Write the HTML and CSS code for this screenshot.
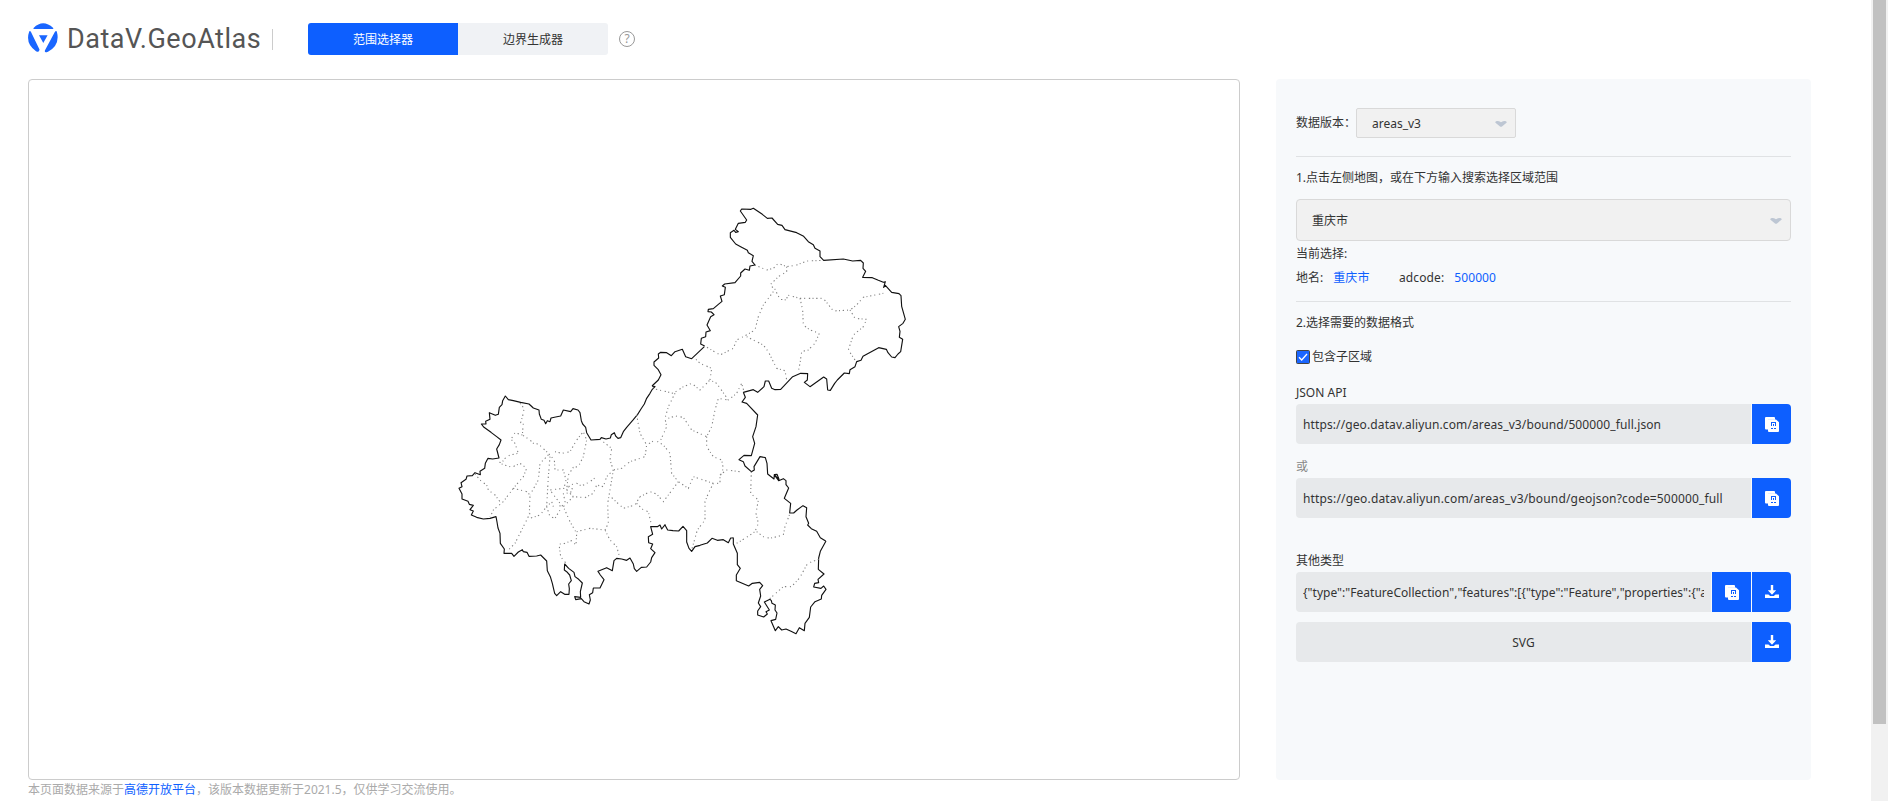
FILE: index.html
```html
<!DOCTYPE html>
<html lang="zh-CN">
<head>
<meta charset="utf-8">
<title>DataV.GeoAtlas</title>
<link rel="stylesheet" href="styles.css">
</head>
<body>
<svg class="defs" width="0" height="0">
  <symbol id="copy" viewBox="0 0 14 15">
    <path fill="#fff" d="M0 1Q0 0 1 0H9Q10 0 10 1V2H3V12.5H1Q0 12.5 0 11.5Z"/>
    <path fill="#fff" fill-opacity=".8" d="M2 1.5H10V3H3.5V12H2Z"/>
    <path fill="#fff" fill-rule="evenodd" d="M3 2.4H11L14 5.2V14Q14 15 13 15H4Q3 15 3 14ZM6 5V9H7V6H10V9H11V5ZM8 7V9H9V7ZM6 11V12H8V11ZM9 11V12H11V11Z"/>
  </symbol>
  <symbol id="download" viewBox="0 0 14 14">
    <path fill="#fff" d="M5.8 0H8.2V5.2H11.2L7 9.8 2.8 5.2H5.8ZM0 9.6H3.4L5.2 11H8.8L10.6 9.6H14V13H0Z"/>
  </symbol>
  <symbol id="arrow" viewBox="0 0 12 6">
    <path fill="#bdc6d3" d="M.2 1.4Q.6 0 2.4 .1Q4 .2 6 1.2Q8 .2 9.6 .1Q11.4 0 11.8 1.4L7 5.4Q6 6 5 5.4Z"/>
  </symbol>
</svg>
<div class="page">
  <main class="content">
    <header class="header">
      <svg class="logo" viewBox="0 0 30 30">
        <path fill="#1a66ff" d="M5.6 4.9Q15-4.2 25.2 4.9Q25.8 6 24.6 6H6.4Q5 6 5.6 4.9ZM1.2 8.4Q2.2 7.6 3 9L11.5 26.6Q11.2 30 8 28.2Q-3 20.5 1.2 8.4ZM28.8 8.4Q27.8 7.6 26.8 9L17 27.2Q16 30.4 20 28.8Q32.5 22 28.8 8.4ZM11 12.3H19.6L15.3 20Z"/>
      </svg>
      <span class="brand">DataV.GeoAtlas</span>
      <span class="divider"></span>
      <nav class="tabs"><a class="tab active">范围选择器</a><a class="tab">边界生成器</a></nav>
      <span class="help">?</span>
    </header>
    <div class="columns">
      <section class="left">
        <div class="map">
          <svg viewBox="28 79 1212 701" class="map-svg">
            <g class="outline">
              <path transform="translate(440 380) scale(.33333)" d="M636 18 645 20 637 28 630 40 620 55 613 72 603 87 593 103 580 119 560 142 550 155 542 173 534 175 527 168 523 158 514 164 511 174 498 177 484 173 480 178 453 180 440 158 437 142 428 132 424 122 420 98 414 90 399 86 392 95 370 90 362 108 347 111 333 114 330 125 322 122 317 131 312 121 304 118 298 102 297 90 280 84 267 72 242 67 220 62 205 59 196 48 188 62 186 74 178 82 175 103 166 106 148 98 150 118 137 124 138 132 124 132 132 142 153 157 170 170 183 180 178 194 170 207 177 234 158 237 144 235 136 250 134 265 120 274 121 284 105 278 97 287 81 288 78 298 63 308 66 320 57 325 66 342 66 357 84 364 88 373 100 376 90 389 100 393 94 405 110 412 130 417 150 415 168 410 171 426 174 444 180 460 181 490 193 507 192 520 215 520 222 529 235 516 247 509 250 515 261 517 267 529 290 528 302 525 320 543 322 572 331 590 337 610 344 640 350 647 362 635 374 643 387 643 388 626 386 612 394 602 389 585 380 575 373 570 374 552 386 565 402 577 405 590 416 598 427 609 421 635 422 652 404 650 407 659 424 656 432 665 447 672 451 660 448 644 458 638 460 624 480 624 492 599 481 585 474 574 500 563 517 572 522 542 530 535 545 537 560 541 570 534 580 552 583 566 590 574 604 562 620 561 632 546 635 533 645 518 632 506 638 492 626 488 625 470 638 463 632 440 652 440 660 435 665 447 676 433"/>
              <path transform="translate(640 330) scale(.33333)" d="M193 50 155 86 137 80 127 58 105 65 94 77 80 68 62 67 55 72 56 84 42 96 42 106 54 118 63 134 55 150 36 168M75 585 83 600 99 602 116 603 129 589 140 602 140 636 147 655 155 664 165 650 180 646 202 639 216 625 232 631 250 629 265 638 272 624 278 624M310 187 316 202 306 216 320 220 353 255 348 290 338 320 344 340 334 377 312 376 297 389 310 395 315 408 334 425 343 420 342 410 360 380 376 383 381 400 383 432 402 447 403 434 411 433 417 448 403 435 416 452 430 446 438 452 438 464 446 474 433 505 452 520 449 549 461 549 471 540 489 527 500 533 498 560 506 580 503 585 514 596 530 604 541 623 557 633"/>
              <path transform="translate(700 200) scale(.33333)" d="M14 438 2 432 4 415 17 410 18 396 31 392 21 375 32 350 42 344 34 336 24 335 25 328 40 326 55 313 66 304 61 288 73 284 76 262 67 258 74 252 105 248 122 228 122 219 135 207 148 211 150 198 165 195 156 184 160 167 145 158 142 151 122 140 107 132 91 112 91 98 102 91 107 97 115 95 106 88 115 70 136 67 140 60 121 33 125 27 153 28 160 25 187 43 202 55 216 54 233 73 246 76 255 89 290 98 311 109 325 125 340 134 345 145 360 153 360 170 371 181 430 177 458 183 482 181 490 189 489 205 497 214 488 232 517 233 535 241 550 247 556 245 551 262 556 256 575 277 597 281 603 287 605 319 616 358 609 370 596 380 600 394 598 412 608 418 602 455 594 462 585 473 575 471 564 458 559 448 536 443 489 469 483 481 470 485 465 500 450 509 448 521 433 519 412 540 404 550 391 571 383 570 380 537 371 531 330 560 313 547 322 540 323 521 302 520 278 530 242 568 225 569 215 565 206 543 196 543 192 560 173 577 160 569 130 577"/>
              <path transform="translate(680 440) scale(.33333)" d="M158 292 160 295 160 312 172 340 172 374 181 385 169 405 169 422 206 438 217 430 239 427 248 437 239 448 242 468 235 489 242 500 233 513 233 525 251 531 262 522 258 515 268 510 253 486 270 478 274 482 276 490 286 495 285 510 291 519 287 538 273 542 286 572 295 560 305 570 318 567 333 574 348 581 358 563 373 572 375 550 388 532 392 501 405 485 424 477 425 466 438 448 431 438 423 445 401 441 404 430 416 428 414 418 432 402 415 388 416 354 421 334 438 303"/>
            </g>
            <g class="district">
              <path transform="translate(440 380) scale(.33333)" d="M240 70 252 85 250 100 242 128 250 130 247 165 270 180 280 190 295 192 320 215 343 240 345 270 370 270 378 300 372 325 330 330M247 165 225 158 213 178 225 190 235 220 210 225 195 235 185 248 175 246M185 252 215 262 240 250 260 265 250 290 220 325 190 365 160 390 150 412M105 282 125 305 140 315 145 330 165 345 180 365M220 325 260 335 270 345 268 400M270 400 240 460 225 490 200 515M325 225 300 250 295 300 270 345M330 230 325 290 320 380 300 405 270 415M320 380 330 410 345 415 360 390 360 370 345 350 330 330M345 215 365 220 390 215 410 180 430 155 440 180 430 230 415 260 400 262 385 285 380 330 400 350 435 353 460 340 470 315 490 320 500 290 520 270 510 240 515 205 480 178M380 330 390 315 410 310 425 318 450 305 470 290M400 350 370 380 390 425 410 460 408 495 395 482 370 492 357 492 362 530 378 550M410 455 450 445 495 450 510 480 530 500 540 535M495 450 505 430 503 370 510 330 520 270 545 265 570 245 615 230 620 195 645 180M600 350 585 375 550 385 510 348M590 370 610 390 625 395 635 437M590 105 600 160 620 195M370 340 375 365 365 380M385 320 400 328M380 340 395 335M340 380 335 365 320 380"/>
              <path transform="translate(640 330) scale(.33333)" d="M168 88 180 100 215 115 210 150 230 160 265 210 290 190 305 160 312 185M37 175 100 190 130 170 155 160 180 180 210 150M105 190 85 230 75 265 80 290 60 335M85 265 105 258 130 262 155 300 200 320 215 290 225 240 235 205 265 210M200 320 200 350 220 380 245 390 250 415 240 440 240 460 220 460 190 450 160 440 145 475 115 455 95 430 90 370 70 345 45 330M115 455 70 515 50 492 30 485 0 500M240 435 260 420 300 425M220 460 205 490 195 515 195 570 172 600 155 660M334 425 332 490 355 510 348 550 355 580 345 605 315 625 290 640M350 605 370 620 390 625 430 615 435 590 450 550"/>
              <path transform="translate(700 200) scale(.33333)" d="M165 195 200 210 220 205 235 190 260 200 290 195 320 183 370 181M260 200 260 215 235 230 210 255 225 268 240 298 260 300 262 285 300 295 370 295 390 320 400 333 450 330 470 315 490 292 550 280M450 330 465 355 500 358 490 380 460 405 445 450 465 480M300 295 308 330 310 375 330 390 358 400 345 430 325 450 305 455 300 490 295 515M220 275 190 315 175 350 165 390 130 410 110 420 100 445 60 465 14 438M140 410 170 425 190 435 205 455 215 475 230 505 255 512 260 540"/>
              <path transform="translate(680 440) scale(.33333)" d="M416 358 395 365 380 375 360 412 335 440 310 440 285 462 265 480"/>
            </g>
          </svg>
        </div>
        <p class="source">本页面数据来源于<a>高德开放平台</a>，该版本数据更新于2021.5，仅供学习交流使用。</p>
      </section>
      <aside class="panel">
        <div class="version"><span>数据版本：</span><div class="select small">areas_v3<svg><use href="#arrow"/></svg></div></div>
        <div class="step first">1.点击左侧地图，或在下方输入搜索选择区域范围</div>
        <div class="select">重庆市<svg><use href="#arrow"/></svg></div>
        <div class="current">当前选择:</div>
        <div class="place"><span>地名:</span><b>重庆市</b><span class="code">adcode:</span><b>500000</b></div>
        <div class="step">2.选择需要的数据格式</div>
        <div class="check"><svg viewBox="0 0 14 14"><rect x=".5" y=".5" width="13" height="13" rx="1" fill="#1a66ff" stroke="#444"/><path d="M3 7.2 5.7 10 11 4" fill="none" stroke="#fff" stroke-width="1.3"/></svg>包含子区域</div>
        <div class="label api">JSON API</div>
        <div class="row"><div class="field">https://geo.datav.aliyun.com/areas_v3/bound/500000_full.json</div><span class="btn"><svg class="copy"><use href="#copy"/></svg></span></div>
        <div class="label or">或</div>
        <div class="row"><div class="field query">https://geo.datav.aliyun.com/areas_v3/bound/geojson?code=500000_full</div><span class="btn"><svg class="copy"><use href="#copy"/></svg></span></div>
        <div class="label other">其他类型</div>
        <div class="row"><div class="field source-json"><div class="clip">{"type":"FeatureCollection","features":[{"type":"Feature","properties":{"a</div></div><span class="btn"><svg class="copy"><use href="#copy"/></svg></span><span class="btn"><svg class="down"><use href="#download"/></svg></span></div>
        <div class="row last"><div class="field center">SVG</div><span class="btn"><svg class="down"><use href="#download"/></svg></span></div>
      </aside>
    </div>
  </main>
  <div class="scrollbar"><div class="thumb"></div></div>
</div>
</body>
</html>
```
FILE: styles.css
```css
* { box-sizing: border-box; }
body { margin: 0; background: #fff; color: #333; font: 12px/18px "Noto Sans", "Noto Sans CJK SC", sans-serif; overflow: hidden; }
.defs { position: absolute; }
.page { display: flex; width: 1888px; height: 801px; }
.content { flex: 1; padding: 23px 60px 0 28px; }
.header { display: flex; height: 56px; align-items: flex-start; }
.logo { width: 30px; height: 30px; flex: none; }
.brand { width: 193px; margin-left: 9px; font: 27px/33px Roboto, sans-serif; letter-spacing: .53px; color: #555; white-space: nowrap; }
.divider { width: 1px; height: 21px; margin: 6px 35px 0 12px; background: #ccc; }
.tabs { display: flex; width: 300px; height: 32px; border-radius: 3px; overflow: hidden; }
.tab { flex: 1; background: #f0f2f5; text-align: center; line-height: 34px; }
.tab.active { background: #0d5fff; color: #fff; }
.help { width: 16px; height: 16px; margin: 8px 0 0 11px; border: 1px solid #999; border-radius: 50%; color: #999; text-align: center; line-height: 14px; }
.columns { display: flex; gap: 36px; }
.left { width: 1212px; }
.map { height: 701px; border: 1px solid #ccc; border-radius: 4px; }
.map-svg { display: block; width: 1212px; height: 701px; margin: -1px; }
.outline { fill: none; stroke: #111; stroke-width: 3.4; stroke-linejoin: round; }
.district { fill: none; stroke: #808080; stroke-width: 3.3; stroke-dasharray: 3 8 4 9 3 11 4 7; }
.source { margin: 1px 0 0; color: #aaa; }
.source a { color: #0d5fff; }
.panel { width: 535px; height: 701px; padding: 29px 20px 0; border-radius: 4px; background: #f7f9fb; }
.version { display: flex; height: 49px; border-bottom: 1px solid #e0e2e4; }
.version > span { width: 60px; line-height: 30px; white-space: nowrap; }
.select { display: flex; justify-content: space-between; align-items: center; height: 42px; padding: 2px 8px 0 15px; border: 1px solid #d9d9d9; border-radius: 4px; background: #f1f1f1; }
.select svg { width: 12px; height: 6px; margin-top: -1px; }
.select.small { width: 160px; height: 30px; border-radius: 2px; }
.step { height: 42px; line-height: 42px; }
.current { height: 25px; line-height: 25px; }
.place { display: flex; height: 36px; line-height: 24px; border-bottom: 1px solid #e0e2e4; }
.place b { margin-left: 10px; color: #0d5fff; font-weight: normal; letter-spacing: .1px; }
.code { margin-left: 29.5px; letter-spacing: .1px; }
.check { display: flex; align-items: center; gap: 2px; height: 26px; }
.check svg { width: 14px; height: 14px; margin-top: -1px; }
.label { line-height: 18px; }
.api { height: 34px; padding-top: 14px; }
.or { height: 34px; padding-top: 14px; color: #888; }
.other { height: 54px; padding-top: 34px; }
.row { display: flex; gap: 1px; height: 40px; border-radius: 4px; overflow: hidden; }
.last { margin-top: 10px; }
.field { flex: 1; min-width: 0; padding: 0 7px; background: #e7e9eb; line-height: 42px; letter-spacing: .11px; white-space: nowrap; overflow: hidden; }
.query { letter-spacing: .16px; }
.source-json { letter-spacing: .03px; }
.clip { overflow: hidden; }
.center { text-align: center; }
.btn { display: flex; align-items: center; justify-content: center; width: 39px; background: #0d5fff; }
.copy { width: 14px; height: 15px; }
.down { width: 14px; height: 14px; }
.scrollbar { width: 17px; padding: 0 2px; background: #f1f1f1; }
.thumb { height: 724px; background: #c1c1c1; }
```
